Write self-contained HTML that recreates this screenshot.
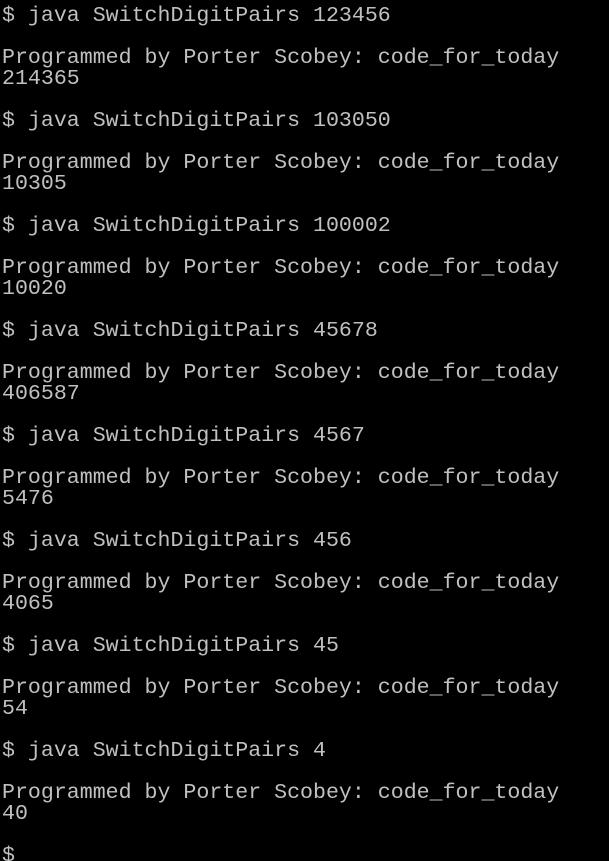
<!DOCTYPE html>
<html><head><meta charset="utf-8"><style>
html,body{margin:0;padding:0;background:#000;width:609px;height:861px;overflow:hidden}
pre{margin:0;padding:6px 0 0 2px;font-family:"Liberation Mono",monospace;font-size:21.6px;line-height:21px;color:#c0c0c0;white-space:pre}
</style></head><body><pre>$ java SwitchDigitPairs 123456

Programmed by Porter Scobey: code_for_today
214365

$ java SwitchDigitPairs 103050

Programmed by Porter Scobey: code_for_today
10305

$ java SwitchDigitPairs 100002

Programmed by Porter Scobey: code_for_today
10020

$ java SwitchDigitPairs 45678

Programmed by Porter Scobey: code_for_today
406587

$ java SwitchDigitPairs 4567

Programmed by Porter Scobey: code_for_today
5476

$ java SwitchDigitPairs 456

Programmed by Porter Scobey: code_for_today
4065

$ java SwitchDigitPairs 45

Programmed by Porter Scobey: code_for_today
54

$ java SwitchDigitPairs 4

Programmed by Porter Scobey: code_for_today
40

$</pre></body></html>
